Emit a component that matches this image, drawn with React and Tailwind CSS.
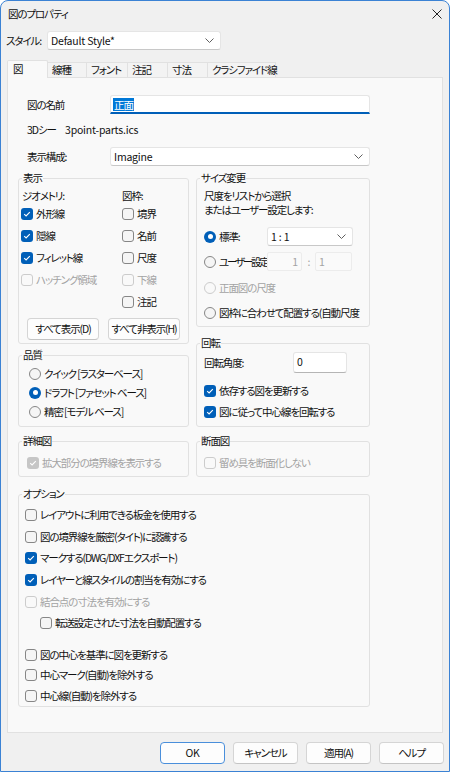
import React from "react";

const dim = "text-[#a3a3a3]";
const latin = "tracking-[-0.2px]";

function Check({ checked = false, disabled = false }) {
  let box = "border border-[#868686] bg-[#f5f5f5]";
  if (checked && !disabled) box = "bg-[#005fb8]";
  if (checked && disabled) box = "bg-[#c6c6c6]";
  if (!checked && disabled) box = "border border-[#cccccc] bg-[#f9f9f9]";
  return (
    <span className={`w-[12px] h-[12px] rounded-[3px] shrink-0 flex items-center justify-center ${box}`}>
      {checked && (
        <svg width="8" height="8" viewBox="0 0 8 8">
          <path d="M1.2 4.1 3.1 6 6.8 2.1" stroke="#fff" strokeWidth="1.1" fill="none" />
        </svg>
      )}
    </span>
  );
}

function Radio({ checked = false, disabled = false }) {
  if (checked) {
    return (
      <span className="w-[12px] h-[12px] rounded-full bg-[#005fb8] shrink-0 flex items-center justify-center">
        <span className="w-[5px] h-[5px] rounded-full bg-white" />
      </span>
    );
  }
  return (
    <span
      className={`w-[12px] h-[12px] rounded-full shrink-0 border ${
        disabled ? "border-[#cccccc] bg-[#f9f9f9]" : "border-[#868686] bg-[#f5f5f5]"
      }`}
    />
  );
}

function CheckRow({ label, checked, disabled, className = "h-[22px]" }) {
  return (
    <div className={`flex items-center gap-[3px] whitespace-nowrap ${className}`}>
      <Check checked={checked} disabled={disabled} />
      <span className={disabled ? dim : ""}>{label}</span>
    </div>
  );
}

function RadioRow({ label, checked, disabled, className = "h-[19px]", labelClass = "" }) {
  return (
    <div className={`flex items-center gap-[3px] whitespace-nowrap ${className}`}>
      <Radio checked={checked} disabled={disabled} />
      <span className={`${disabled ? dim : ""} ${labelClass}`}>{label}</span>
    </div>
  );
}

function Group({ title, className = "", children }) {
  return (
    <fieldset className={`border border-[#e1e1e1] rounded-[3px] ${className}`}>
      <legend className="ml-[3px] px-[1px] leading-[14px]">{title}</legend>
      {children}
    </fieldset>
  );
}

function Chevron() {
  return (
    <svg width="9" height="5" viewBox="0 0 9 5" className="shrink-0">
      <path d="M0.5 0.5 4.5 4.5 8.5 0.5" stroke="#5f5f5f" strokeWidth="1" fill="none" />
    </svg>
  );
}

function Combo({ value, className }) {
  return (
    <div
      className={`flex items-center justify-between bg-white border border-[#e5e5e5] border-b-[#c8c8c8] rounded-[3px] pl-[3px] pr-[6px] ${className}`}
    >
      <span className={`whitespace-nowrap ${latin}`}>{value}</span>
      <Chevron />
    </div>
  );
}

function Button({ children, primary = false, className = "w-[65px]" }) {
  return (
    <div
      className={`h-[22px] flex items-center justify-center rounded-[4px] bg-[#fdfdfd] border whitespace-nowrap ${
        primary ? "border-[#4a8fdb]" : "border-[#d5d5d5] border-b-[#c4c4c4]"
      } ${className}`}
    >
      {children}
    </div>
  );
}

const tabs = [
  { name: "線種", w: "w-[39px]" },
  { name: "フォント", w: "w-[41px]" },
  { name: "注記", w: "w-[40px]" },
  { name: "寸法", w: "w-[40px]" },
  { name: "クラシファイド線", w: "w-[68px]" },
];

export default function App() {
  return (
    <div className="w-[450px] h-[772px] bg-[#f0f0f0] border border-[#3b82d4] rounded-t-[8px] overflow-hidden flex flex-col text-[10.5px] leading-[14px] tracking-[-1.1px] text-[#111111] font-['Noto_Sans_CJK_JP',sans-serif] [font-feature-settings:'palt']">
      {/* title bar */}
      <div className="h-[26px] shrink-0 flex items-center justify-between pl-[7px] pr-[7px]">
        <span>図のプロパティ</span>
        <svg width="10" height="10" viewBox="0 0 10 10">
          <path d="M0.5 0.5 9.5 9.5 M9.5 0.5 0.5 9.5" stroke="#222" strokeWidth="1" />
        </svg>
      </div>

      {/* style selector */}
      <div className="mt-[4px] h-[19px] shrink-0 flex items-center pl-[5px]">
        <span className="w-[41px] whitespace-nowrap">スタイル:</span>
        <Combo value="Default Style*" className="w-[174px] h-[19px]" />
      </div>

      {/* tabs */}
      <div className="mt-[10px] h-[18px] shrink-0 ml-[6px] w-[436px] flex items-end">
        <div className="w-[41px] h-[18px] pl-[5px] pt-[1px] bg-[#f9f9f9] border-t border-l border-r border-[#e1e1e1] rounded-t-[2px]">
          図
        </div>
        {tabs.map((t) => (
          <div
            key={t.name}
            className={`${t.w} h-[16px] pl-[4px] flex items-center bg-[#f3f3f3] border-t border-r border-b border-[#e1e1e1] whitespace-nowrap`}
          >
            {t.name}
          </div>
        ))}
        <div className="flex-1 border-b border-[#e1e1e1]" />
      </div>

      {/* tab panel */}
      <div className="ml-[6px] w-[436px] h-[655px] shrink-0 bg-[#f9f9f9] border-l border-r border-b border-[#e1e1e1] flex flex-col">
        <div className="mt-[17px] h-[19px] pl-[19px] flex items-center">
          <span className="w-[83px]">図の名前</span>
          <div className="w-[260px] h-[19px] bg-white border border-[#e5e5e5] border-b-2 border-b-[#005fb8] rounded-t-[3px] flex items-center pl-[2px]">
            <span className="bg-[#0078d7] text-white leading-[13px] px-[1px]">正面</span>
          </div>
        </div>

        <div className="mt-[7px] h-[18px] pl-[19px] flex items-center">
          <span className="w-[38px]">3Dシー</span>
          <span className={latin}>3point-parts.ics</span>
        </div>

        <div className="mt-[8px] h-[19px] pl-[19px] flex items-center">
          <span className="w-[83px]">表示構成:</span>
          <Combo value="Imagine" className="w-[260px] h-[19px]" />
        </div>

        <div className="pl-[10px] flex flex-col">
          <div className="flex items-start gap-[7px] mt-[5px]">
            {/* left column */}
            <div className="w-[171px] flex flex-col">
              <Group title="表示">
                <div className="pt-[4px] pl-[2px] flex">
                  <div className="w-[101px] flex flex-col">
                    <div className="h-[14px] pl-[1px]">ジオメトリ:</div>
                    <CheckRow label="外形線" checked />
                    <CheckRow label="隠線" checked />
                    <CheckRow label="フィレット線" checked />
                    <CheckRow label="ハッチング領域" disabled />
                  </div>
                  <div className="flex flex-col">
                    <div className="h-[14px]">図枠:</div>
                    <CheckRow label="境界" />
                    <CheckRow label="名前" />
                    <CheckRow label="尺度" />
                    <CheckRow label="下線" disabled />
                    <CheckRow label="注記" />
                  </div>
                </div>
                <div className="mt-[5px] pb-[3px] pl-[8px] flex gap-[9px]">
                  <Button className="w-[72px]">すべて表示(D)</Button>
                  <Button className="w-[72px]">すべて非表示(H)</Button>
                </div>
              </Group>

              <Group title="品質" className="mt-[4px]">
                <div className="pt-[2px] pb-[5px] pl-[10px] flex flex-col">
                  <RadioRow label="クイック [ラスターベース]" />
                  <RadioRow label="ドラフト [ファセット ベース]" checked />
                  <RadioRow label="精密 [モデル ベース]" />
                </div>
              </Group>
            </div>

            {/* right column */}
            <div className="w-[174px] flex flex-col">
              <Group title="サイズ変更">
                <div className="pt-[4px] pb-[3px] pl-[7px] flex flex-col">
                  <div>尺度をリストから選択</div>
                  <div>またはユーザー設定します:</div>
                  <div className="mt-[10px] h-[19px] flex items-center">
                    <RadioRow label="標準:" checked className="w-[63px]" />
                    <Combo value="1 : 1" className="w-[86px] h-[19px]" />
                  </div>
                  <div className="mt-[6px] h-[19px] flex items-center">
                    <RadioRow label="ユーザー設定" className="w-[63px]" labelClass="tracking-[-2.2px]" />
                    <div className={`w-[35px] h-[19px] border border-[#ececec] bg-[#fafafa] rounded-[2px] flex items-center justify-end pr-[4px] ${dim}`}>
                      1
                    </div>
                    <span className={`w-[13px] text-center ${dim}`}>:</span>
                    <div className={`w-[37px] h-[19px] border border-[#ececec] bg-[#fafafa] rounded-[2px] flex items-center pl-[3px] ${dim}`}>
                      1
                    </div>
                  </div>
                  <RadioRow label="正面図の尺度" disabled className="mt-[7px] h-[20px]" />
                  <RadioRow label="図枠に合わせて配置する(自動尺度" className="mt-[5px] h-[20px] overflow-hidden" />
                </div>
              </Group>

              <Group title="回転" className="mt-[9px]">
                <div className="pt-[2px] pb-[4px] pl-[7px] flex flex-col">
                  <div className="h-[21px] flex items-center">
                    <span className="w-[89px]">回転角度:</span>
                    <div className="w-[54px] h-[21px] bg-white border border-[#e5e5e5] border-b-[#b5b5b5] rounded-[3px] pl-[3px] pt-[2px]">
                      0
                    </div>
                  </div>
                  <CheckRow label="依存する図を更新する" checked className="mt-[7px] h-[21px]" />
                  <CheckRow label="図に従って中心線を回転する" checked className="h-[21px]" />
                </div>
              </Group>
            </div>
          </div>

          <div className="mt-[7px] flex gap-[7px]">
            <Group title="詳細図" className="w-[171px]">
              <div className="pt-[5px] pb-[3px] pl-[8px]">
                <CheckRow label="拡大部分の境界線を表示する" checked disabled className="h-[20px]" />
              </div>
            </Group>
            <Group title="断面図" className="w-[174px]">
              <div className="pt-[5px] pb-[3px] pl-[7px]">
                <CheckRow label="留め具を断面化しない" disabled className="h-[20px]" />
              </div>
            </Group>
          </div>

          <Group title="オプション" className="mt-[10px] w-[352px]">
            <div className="pt-[3px] pl-[6px] flex flex-col">
              <CheckRow label="レイアウトに利用できる板金を使用する" className="h-[21.7px]" />
              <CheckRow label="図の境界線を厳密(タイト)に認識する" className="h-[21.7px]" />
              <CheckRow label="マークする(DWG/DXFエクスポート)" checked className="h-[21.7px]" />
              <CheckRow label="レイヤーと線スタイルの割当を有効にする" checked className="h-[21.7px]" />
              <CheckRow label="結合点の寸法を有効にする" disabled className="h-[21.7px]" />
              <CheckRow label="転送設定された寸法を自動配置する" className="h-[21.7px] ml-[15px]" />
              <CheckRow label="図の中心を基準に図を更新する" className="mt-[10.5px] h-[20.5px]" />
              <CheckRow label="中心マーク(自動)を除外する" className="h-[20.5px]" />
              <CheckRow label="中心線(自動)を除外する" className="h-[20.5px]" />
            </div>
          </Group>
        </div>
      </div>

      {/* dialog buttons */}
      <div className="mt-[9px] h-[22px] shrink-0 flex justify-end gap-[8px] pr-[5px]">
        <Button primary>
          <span className={latin}>OK</span>
        </Button>
        <Button>キャンセル</Button>
        <Button>適用(A)</Button>
        <Button>ヘルプ</Button>
      </div>
    </div>
  );
}
